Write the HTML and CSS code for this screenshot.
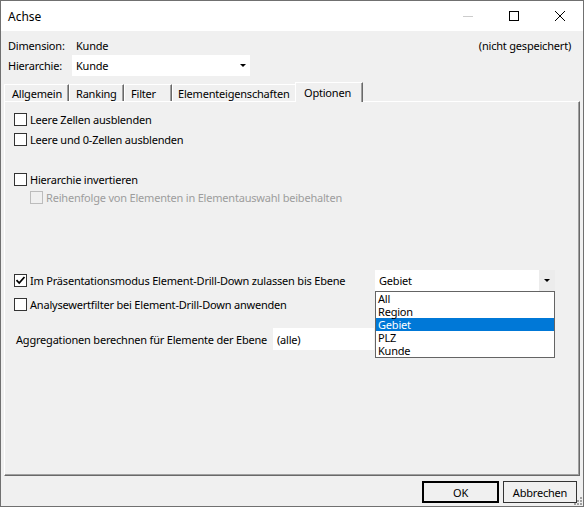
FILE: index.html
```html
<!DOCTYPE html>
<html>
<head>
<meta charset="utf-8">
<link rel="stylesheet" href="styles.css">
</head>
<body>
<div class="window">
  <div class="titlebar">
    <span class="title">Achse</span>
    <div class="caption">
      <span class="cbtn"><svg width="10" height="10" viewBox="0 0 10 10"><path d="M0 5.5H10" stroke="#cccccc" stroke-width="1"/></svg></span>
      <span class="cbtn"><svg width="10" height="10" viewBox="0 0 10 10"><rect x="0.5" y="0.5" width="9" height="9" fill="none" stroke="#000" stroke-width="1"/></svg></span>
      <span class="cbtn"><svg width="10" height="10" viewBox="0 0 10 10"><path d="M0 0L10 10M10 0L0 10" stroke="#000" stroke-width="1"/></svg></span>
    </div>
  </div>
  <div class="client">
    <div class="hdr1">
      <span class="lbl1">Dimension:</span>
      <span>Kunde</span>
      <span class="status">(nicht gespeichert)</span>
    </div>
    <div class="hdr2">
      <span class="lbl2">Hierarchie:</span>
      <div class="combo combo-hier">
        <span class="ctext">Kunde</span>
        <span class="cbtn-drop"><span class="arrow"></span></span>
      </div>
    </div>
    <div class="tabs">
      <div class="tab tab-allg">Allgemein</div>
      <div class="tab tab-rank">Ranking</div>
      <div class="tab tab-filt">Filter</div>
      <div class="tab tab-elem">Elementeigenschaften</div>
      <div class="tab tab-opt sel">Optionen</div>
    </div>
    <div class="panel">
      <div class="row r1"><span class="cb"></span><span>Leere Zellen ausblenden</span></div>
      <div class="row r2"><span class="cb"></span><span>Leere und 0-Zellen ausblenden</span></div>
      <div class="row r3"><span class="cb"></span><span>Hierarchie invertieren</span></div>
      <div class="row r4 disabled"><span class="cb"></span><span>Reihenfolge von Elementen in Elementauswahl beibehalten</span></div>
      <div class="row r5">
        <div class="r5-label"><span class="cb checked"><svg width="11" height="11" viewBox="0 0 11 11"><path d="M1.5 5.2L4.2 8L9.5 2" fill="none" stroke="#000" stroke-width="1.8"/></svg></span><span>Im Präsentationsmodus Element-Drill-Down zulassen bis Ebene</span></div>
        <div class="combo combo-ebene">
          <span class="ctext">Gebiet</span>
          <span class="cbtn-drop open"><span class="arrow"></span></span>
        </div>
      </div>
      <div class="row r6"><span class="cb"></span><span>Analysewertfilter bei Element-Drill-Down anwenden</span></div>
      <div class="row r7">
        <span class="agg-label">Aggregationen berechnen für Elemente der Ebene</span>
        <div class="input-alle">(alle)</div>
      </div>
    </div>
    <div class="buttons">
      <div class="btn btn-ok">OK</div>
      <div class="btn btn-cancel">Abbrechen</div>
    </div>
    <div class="droplist">
      <div class="item">All</div>
      <div class="item">Region</div>
      <div class="item hl">Gebiet</div>
      <div class="item">PLZ</div>
      <div class="item">Kunde</div>
    </div>
    <svg class="grip" width="12" height="12" viewBox="0 0 12 12">
      <rect x="9" y="3" width="2" height="2" fill="#a0a0a0"/>
      <rect x="6" y="6" width="2" height="2" fill="#a0a0a0"/>
      <rect x="9" y="6" width="2" height="2" fill="#a0a0a0"/>
      <rect x="3" y="9" width="2" height="2" fill="#a0a0a0"/>
      <rect x="6" y="9" width="2" height="2" fill="#a0a0a0"/>
      <rect x="9" y="9" width="2" height="2" fill="#a0a0a0"/>
    </svg>
  </div>
</div>
</body>
</html>
```
FILE: styles.css
```css
* { box-sizing: border-box; }
html, body { margin: 0; padding: 0; }
body {
  width: 584px;
  height: 507px;
  overflow: hidden;
  font-family: "Noto Sans", "Liberation Sans", sans-serif;
  font-size: 11px;
  letter-spacing: -0.2px;
  color: #000;
  background: #f0f0f0;
}
.window {
  width: 584px;
  height: 507px;
  border: 1px solid #707070;
  display: flex;
  flex-direction: column;
  background: #f0f0f0;
}
.titlebar {
  height: 30px;
  flex: none;
  background: #fff;
  display: flex;
  align-items: center;
}
.title {
  flex: 1;
  padding-left: 7px;
  font-size: 12px;
  letter-spacing: 0;
}
.caption { display: flex; height: 30px; }
.cbtn {
  width: 46px;
  height: 30px;
  display: flex;
  align-items: center;
  justify-content: center;
}
.cbtn svg { display: block; }
.client {
  flex: 1;
  position: relative;
  display: flex;
  flex-direction: column;
}
.hdr1 {
  margin: 6px 12px 0 7px;
  height: 16px;
  display: flex;
  align-items: center;
}
.lbl1 { width: 68px; }
.status { margin-left: auto; }
.hdr2 {
  margin: 2px 0 0 7px;
  height: 21px;
  display: flex;
  align-items: center;
}
.lbl2 { width: 64px; }
.combo {
  height: 21px;
  background: #fff;
  display: flex;
  align-items: center;
  padding-left: 4px;
}
.combo-hier { width: 178px; }
.combo-hier .cbtn-drop { width: 14px; }
.combo-ebene { width: 180px; }
.ctext { flex: 1; }
.cbtn-drop {
  width: 16px;
  height: 100%;
  display: flex;
  align-items: center;
  justify-content: center;
}
.cbtn-drop.open { background: #ececec; }
.arrow {
  width: 0;
  height: 0;
  border-left: 3px solid transparent;
  border-right: 3px solid transparent;
  border-top: 3px solid #000;
}
.tabs {
  margin: 6px 0 0 3px;
  height: 19px;
  display: flex;
  align-items: flex-end;
}
.tab {
  height: 17px;
  border-top: 1px solid #fff;
  border-left: 1px solid #fff;
  border-right: 1px solid #696969;
  box-shadow: inset -1px 0 #a0a0a0;
  padding-left: 6px;
  display: flex;
  align-items: center;
  background: #f0f0f0;
  white-space: nowrap;
}
.tab-allg { width: 65px; padding-left: 7px; }
.tab-rank { width: 55px; }
.tab-filt { width: 48px; }
.tab-elem { width: 125px; padding-left: 5px; }
.tab.sel {
  width: 68px;
  height: 20px;
  margin-left: -2px;
  margin-bottom: -1px;
  padding-left: 8px;
  padding-bottom: 1px;
  position: relative;
  z-index: 1;
}
.panel {
  margin-left: 3px;
  width: 576px;
  height: 375px;
  flex: none;
  border-top: 1px solid #fff;
  border-left: 1px solid #fff;
  border-right: 1px solid #696969;
  border-bottom: 1px solid #696969;
  box-shadow: inset -1px -1px #a0a0a0;
  padding: 8px 0 0 9px;
}
.row {
  display: flex;
  align-items: center;
  height: 18px;
  width: max-content;
  white-space: nowrap;
}
.cb {
  width: 13px;
  height: 13px;
  flex: none;
  border: 1px solid #333;
  background: #fff;
  margin-right: 3px;
  display: flex;
  align-items: center;
  justify-content: center;
}
.cb svg { display: block; }
.r2 { margin-top: 2px; }
.r3 { margin-top: 22px; }
.r4 { margin-left: 16px; }
.disabled { color: #9d9d9d; }
.disabled .cb { border-color: #bcbcbc; background: #f0f0f0; }
.r5 { margin-top: 64px; height: 21px; }
.r5-label { width: 361px; display: flex; align-items: center; }
.r6 { margin-top: 4px; }
.r7 { margin-top: 15px; height: 22px; padding-left: 2px; }
.agg-label { width: 257px; }
.input-alle {
  width: 101px;
  height: 22px;
  background: #fff;
  padding-left: 4px;
  display: flex;
  align-items: center;
}
.buttons {
  margin-top: 5px;
  display: flex;
  justify-content: flex-end;
  gap: 4px;
  padding-right: 6px;
}
.btn {
  height: 22px;
  display: flex;
  align-items: center;
  justify-content: center;
  background: #f0f0f0;
}
.btn-ok { width: 77px; border: 2px solid #000; }
.btn-cancel { width: 74px; border: 1px solid #333; }
.droplist {
  position: absolute;
  left: 374px;
  top: 260px;
  width: 180px;
  height: 67px;
  border: 1px solid #646464;
  background: #fff;
  z-index: 5;
}
.item {
  height: 13px;
  line-height: 13px;
  padding-left: 2px;
}
.item.hl { background: #0078d7; color: #fff; }
.grip {
  position: absolute;
  right: 0;
  bottom: 0;
}
```
